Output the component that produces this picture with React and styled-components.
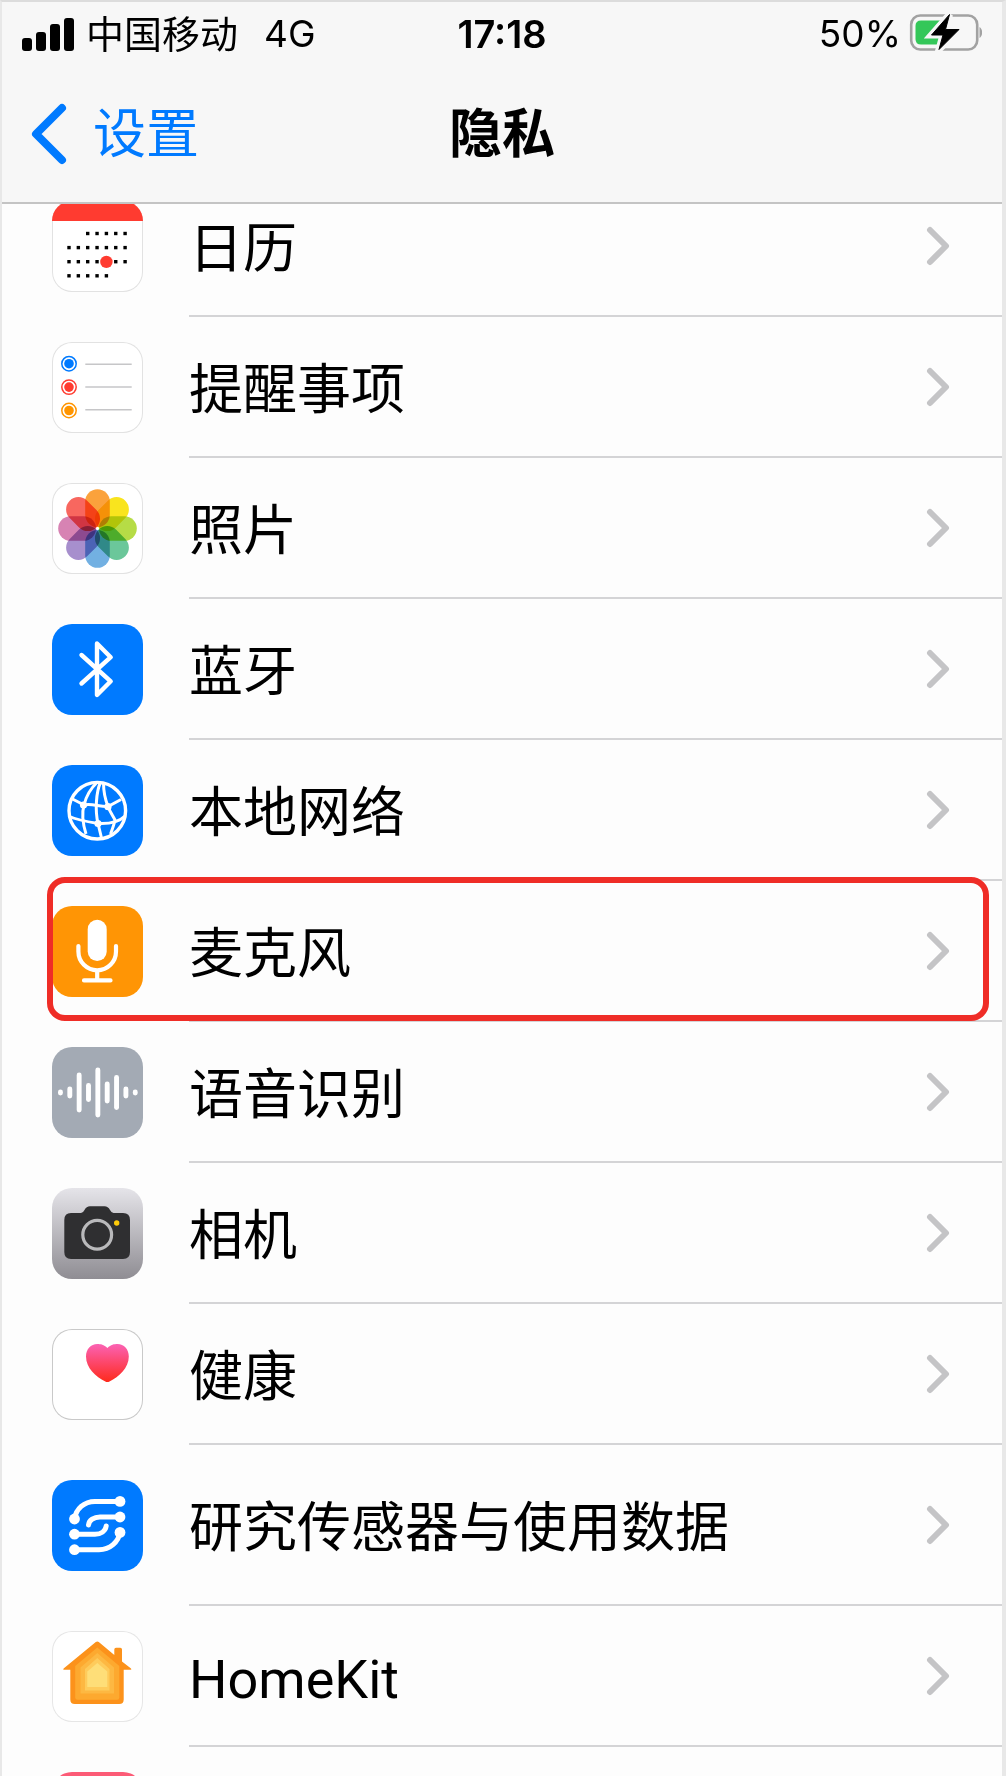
import React from "react";
import styled, { createGlobalStyle } from "styled-components";

const GlobalStyle = createGlobalStyle`
  * {
    box-sizing: border-box;
  }
  body {
    margin: 0;
    background-color: #fdfdfd;
    color: #000;
    font-family: Inter, "Noto Sans CJK SC", sans-serif;
  }
`;

const Page = styled.div`
  display: flex;
  flex-direction: column;
  height: 100vh;
  overflow: hidden;
  border: solid #e8e8e8;
  border-width: 2px 4px 0 2px;
  border-top-color: #dcdcdc;
`;

const Header = styled.header`
  position: relative;
  z-index: 1;
  flex: none;
  background-color: #f7f7f7;
  border-bottom: 2px solid #c4c4c4;
`;

const StatusBar = styled.div`
  display: grid;
  grid-template-columns: 1fr auto 1fr;
  align-items: center;
  height: 64px;
  padding: 0 20px;
  font-size: 37px;
  line-height: 40px;
`;

const StatusGroup = styled.div`
  display: flex;
  align-items: center;
  justify-content: ${props => props.$end ? 'flex-end' : 'flex-start'};
  gap: ${props => props.$end ? '8px' : '12px'};
`;

const Carrier = styled.span`
  font-size: 38px;
`;

const Network = styled.span`
  margin-left: 14px;
`;

const Clock = styled.time`
  font-size: 38px;
  font-weight: 600;
`;

const NavBar = styled.nav`
  display: grid;
  grid-template-columns: 1fr auto 1fr;
  align-items: center;
  height: 136px;
  padding: 0 28px;
  font-size: 53px;
  line-height: 64px;
`;

const BackLink = styled.a`
  display: flex;
  align-items: center;
  gap: 26px;
  color: #007aff;
  text-decoration: none;
`;

const Title = styled.h1`
  margin: 0;
  font-size: inherit;
  font-weight: 700;
`;

// the list is scrolled a little way under the header
const List = styled.ul`
  flex: 1;
  min-height: 0;
  margin: -28px 0 0;
  padding: 0;
  list-style: none;
  overflow-y: auto;
  scrollbar-width: none;
`;

const Item = styled.li`
  position: relative;
`;

const Row = styled.a`
  display: flex;
  align-items: center;
  gap: 46px;
  height: ${props => props.$tall ? '161px' : '141px'};
  padding-left: 50px;
  color: inherit;
  text-decoration: none;
`;

const RowBody = styled.span`
  display: flex;
  flex: 1;
  align-items: center;
  justify-content: space-between;
  height: 100%;
  padding-right: 52px;
  border-bottom: 2px solid #d4d4d6;
`;

const RowLabel = styled.span`
  padding-top: 8px;
  font-family: Roboto, "Noto Sans CJK SC", sans-serif;
  font-size: 54px;
  line-height: 64px;
`;

const Highlight = styled.div`
  position: absolute;
  inset: -4px 13px 1px 45px;
  border: 6px solid #ef2d27;
  border-radius: 18px;
  pointer-events: none;
`;

const IconTile = styled.svg`
  flex: none;
  width: 91px;
  height: 91px;
  border-radius: 20px;
  background: ${props => props.$bg || '#fff'};
  box-shadow: ${props => props.$edge ? `inset 0 0 0 1px ${props.$edge}` : 'none'};
`;

const SignalIcon = () => (
  <svg width="52" height="33" viewBox="0 0 52 33" aria-hidden="true">
    <rect x="0" y="20" width="10" height="13" rx="3" />
    <rect x="14" y="14" width="10" height="19" rx="3" />
    <rect x="28" y="6" width="10" height="27" rx="3" />
    <rect x="42" y="0" width="10" height="33" rx="3" />
  </svg>
);

const BOLT = "M39.5 1.5 L35.5 16.5 H49 L29 36.5 L33 22 H21.5 Z";

const BatteryIcon = () => (
  <svg width="73" height="40" viewBox="-1 1 73 40" aria-hidden="true">
    <rect x="1.2" y="2.5" width="66" height="34" rx="9" fill="none" stroke="#a2a2a2" strokeWidth="2.6" />
    <path d="M69.5 14 C73 16 73 23 69.5 25 Z" fill="#a2a2a2" />
    <path d="M11 7.5 H33 V31.5 H11 Q5.5 31.5 5.5 26 V13 Q5.5 7.5 11 7.5 Z" fill="#34c759" />
    <path d={BOLT} fill="#f7f7f7" stroke="#f7f7f7" strokeWidth="7" />
    <path d={BOLT} stroke="#000" strokeWidth="1" strokeLinejoin="round" />
  </svg>
);

const BackIcon = () => (
  <svg width="37" height="62" viewBox="0 0 37 62" fill="none" aria-hidden="true">
    <path d="M32 5 L6 31 L32 57" stroke="#007aff" strokeWidth="8" strokeLinecap="round" strokeLinejoin="round" />
  </svg>
);

const ChevronIcon = () => (
  <svg width="24" height="40" viewBox="0 0 24 40" fill="none" aria-hidden="true">
    <path d="M4 4 L20 20 L4 36" stroke="#c4c4c6" strokeWidth="6" strokeLinecap="round" strokeLinejoin="round" />
  </svg>
);

// [first dot, last dot] of each week
const weeks = [[2, 6], [0, 6], [0, 6], [0, 4]];

const CalendarIcon = () => (
  <IconTile viewBox="0 0 91 91" $edge="#e2e2e2">
    <rect width="91" height="20" fill="#ff3b30" />
    {weeks.map(([first, last], row) =>
      Array.from({ length: last - first + 1 }, (_, i) => (
        <rect key={`${row}-${i}`} x={15.3 + (first + i) * 9.35} y={30.8 + row * 14.1} width="3.4" height="3.4" />
      ))
    )}
    <circle cx="54.4" cy="60.9" r="7.5" fill="#fff" />
    <circle cx="54.4" cy="60.9" r="6.2" fill="#ff3b30" />
  </IconTile>
);

const RemindersIcon = () => (
  <IconTile viewBox="0 0 91 91" $edge="#e2e2e2">
    {['#007aff', '#ff3b30', '#ff9500'].map((color, i) => (
      <g key={color}>
        <circle cx="17" cy={21.7 + i * 23.4} r="7.2" fill="none" stroke={color} strokeWidth="1.5" />
        <circle cx="17" cy={21.7 + i * 23.4} r="4.8" fill={color} />
        <path d={`M33.3 ${22.2 + i * 22.8} H79.7`} stroke="#c6c6c8" strokeWidth="1.4" />
      </g>
    ))}
  </IconTile>
);

const petals = ['#fba23c', '#f9e41e', '#b6dc46', '#6bc79a', '#72b0e2', '#a78fcd', '#d783b3', '#f8675f'];

const Petal = styled.rect`
  mix-blend-mode: multiply;
`;

const PhotosIcon = () => (
  <IconTile viewBox="0 0 91 91" $edge="#e2e2e2">
    {petals.map((color, i) => (
      <Petal
        key={color}
        x="33.2"
        y="6.2"
        width="24.6"
        height="37.8"
        rx="12.3"
        fill={color}
        transform={`rotate(${i * 45} 45.5 45.5)`}
      />
    ))}
  </IconTile>
);

const BluetoothIcon = () => (
  <IconTile viewBox="0 0 91 91" $bg="#007aff" fill="none">
    <path d="M29.5 31 L58.7 57.3 L45 71 V19.5 L58.7 33.2 L29.5 59.5" stroke="#fff" strokeWidth="4.4" strokeLinecap="round" strokeLinejoin="round" />
  </IconTile>
);

const GlobeIcon = () => (
  <IconTile viewBox="0 0 91 91" $bg="#007aff" fill="none">
    <g stroke="#fff" strokeWidth="3">
      <circle cx="45.3" cy="45.7" r="28.3" strokeWidth="3.4" />
      <path d="M45 17.5 C38 24 34 32 32 40 C30 47 30 56 34 69" />
      <path d="M48.5 17.5 C44 27 43 46 46 58.5 L49.5 73" />
      <path d="M51.5 17.5 C51.5 28 53 34 56 41.5 C58 47 61 51 63 55 C62 60 60 65 58.5 69" />
      <path d="M20.5 34 L32 40 C39 38 48 42 56 41.5 L69 34.5" />
      <path d="M17.5 51.500 C25 55 37 57 46 58.500 C56 59 67 57 73 51" />
    </g>
    <g fill="#fff">
      <circle cx="31.500" cy="40" r="3.600" />
      <circle cx="56" cy="41.700" r="3.600" />
      <circle cx="46" cy="58.500" r="3.600" />
    </g>
  </IconTile>
);

const MicrophoneIcon = () => (
  <IconTile viewBox="0 0 91 91" $bg="#ff9505" fill="none" stroke="#fff" strokeLinecap="round">
    <rect x="35.7" y="13.7" width="19" height="41.4" rx="9.5" fill="#fff" stroke="none" />
    <path d="M26.4 40 V45.5 A18.8 18.8 0 0 0 64 45.5 V40 M45.2 65 V74 M32 74.4 H58.5" strokeWidth="4.2" />
  </IconTile>
);

const waveBars = [6, 12, 40, 19, 50, 22, 35, 12, 6];

const SpeechIcon = () => (
  <IconTile viewBox="0 0 91 91" $bg="#a3aab4" fill="#fff">
    {waveBars.map((height, i) => (
      <rect key={i} x={6 + i * 9.35} y={45.5 - height / 2} width="4.9" height={height} rx="2.4" />
    ))}
  </IconTile>
);

const CameraIcon = () => (
  <IconTile viewBox="0 0 91 91" $bg="linear-gradient(#e5e4e9, #8f8d93)">
    <path
      d="M19 25 H29 Q31 25 32.5 22 Q34.5 18.3 38 18.3 H52.5 Q56 18.3 58 22 Q59.5 25 61.5 25 H71 Q78 25 78 32 V64 Q78 71 71 71 H19 Q12.3 71 12.3 64 V32 Q12.3 25 19 25 Z"
      fill="#2f2f31"
    />
    <circle cx="45.2" cy="46.8" r="14.4" fill="none" stroke="#b9b9bb" strokeWidth="3.2" />
    <circle cx="64.7" cy="35" r="2.7" fill="#fecb0a" />
  </IconTile>
);

const HealthIcon = () => (
  <IconTile viewBox="0 0 91 91" $edge="#c9c9c9">
    <defs>
      <linearGradient id="heart" x1="0" y1="0" x2="0" y2="1">
        <stop offset="0" stopColor="#fb62b4" />
        <stop offset="1" stopColor="#fe2a1c" />
      </linearGradient>
    </defs>
    <path
      d="M55.4 19 C59 15.5 62 15 65.5 15 C72 15 76.8 20 76.8 27.5 C76.8 39 67 47.5 57.5 52.6 Q55.4 53.6 53.3 52.6 C43.8 47.5 34 39 34 27.5 C34 20 38.8 15 45.3 15 C48.8 15 51.8 15.5 55.4 19 Z"
      fill="url(#heart)"
    />
  </IconTile>
);

const ResearchIcon = () => (
  <IconTile viewBox="0 0 91 91" $bg="#007aff" fill="none">
    <g stroke="#fff" strokeWidth="5" strokeLinecap="round">
      <path d="M22.5 39 C24 29 32 21.4 43 21.4 H68" />
      <path d="M36.5 45 C37 40 42 37 48 37 H68" />
      <path d="M22.5 54.2 H43 C49 54.2 53.5 51 54.2 46" />
      <path d="M22.5 69.7 H47 C58 69.7 66.5 62 68 52.4" />
    </g>
    <g fill="#fff">
      <circle cx="68" cy="21.4" r="5.4" />
      <circle cx="22.5" cy="39" r="5.4" />
      <circle cx="68" cy="37" r="5.4" />
      <circle cx="22.5" cy="54.2" r="5.4" />
      <circle cx="68" cy="52.4" r="5.4" />
      <circle cx="22.5" cy="69.7" r="5.4" />
    </g>
  </IconTile>
);

const HomeIcon = () => (
  <IconTile viewBox="0 0 91 91" $edge="#e6e6e6">
    <path
      d="M43.8 11 Q45.3 9.8 46.8 11 L62.3 24 V18.5 Q62.3 16.7 64 16.7 H68.3 Q70 16.7 70 18.5 V30.5 L79 37.5 Q80 38.8 78.5 38.8 H71.7 V68.5 Q71.7 73 67.2 73 H22.8 Q18.3 73 18.3 68.5 V38.8 H12 Q10.5 38.8 11.6 37.5 Z"
      fill="#fc921b"
    />
    <path d="M45.3 16.5 L67.3 35 V66.5 Q67.3 68.7 65 68.7 H25.5 Q23.2 68.7 23.2 66.5 V35 Z" fill="#fda92f" />
    <path d="M45.3 22 L62 36.5 V62.5 H28.5 V36.5 Z" fill="#fdb842" />
    <path d="M45.3 27 L57.5 38 V59.5 H33 V38 Z" fill="#fecb5b" />
    <path d="M45.3 32 L55.3 40.5 V56 H35.3 V40.5 Z" fill="#fede78" />
  </IconTile>
);

const MusicIcon = () => <IconTile viewBox="0 0 91 91" $bg="#fc5b76" />;

const items = [
  { label: '日历', icon: CalendarIcon },
  { label: '提醒事项', icon: RemindersIcon },
  { label: '照片', icon: PhotosIcon },
  { label: '蓝牙', icon: BluetoothIcon },
  { label: '本地网络', icon: GlobeIcon },
  { label: '麦克风', icon: MicrophoneIcon, highlighted: true },
  { label: '语音识别', icon: SpeechIcon },
  { label: '相机', icon: CameraIcon },
  { label: '健康', icon: HealthIcon },
  { label: '研究传感器与使用数据', icon: ResearchIcon, tall: true },
  { label: 'HomeKit', icon: HomeIcon },
];

const App = () => {
  return (
    <>
      <GlobalStyle />
      <Page>
        <Header>
          <StatusBar>
            <StatusGroup>
              <SignalIcon />
              <Carrier>中国移动</Carrier>
              <Network>4G</Network>
            </StatusGroup>
            <Clock>17:18</Clock>
            <StatusGroup $end>
              <span>50%</span>
              <BatteryIcon />
            </StatusGroup>
          </StatusBar>
          <NavBar>
            <BackLink href="#settings">
              <BackIcon />
              <span>设置</span>
            </BackLink>
            <Title>隐私</Title>
          </NavBar>
        </Header>
        <List>
          {items.map(({ label, icon: Icon, tall, highlighted }) => (
            <Item key={label}>
              <Row href="#" $tall={tall}>
                <Icon />
                <RowBody>
                  <RowLabel>{label}</RowLabel>
                  <ChevronIcon />
                </RowBody>
              </Row>
              {highlighted && <Highlight />}
            </Item>
          ))}
          <Item>
            <Row as="div">
              <MusicIcon />
            </Row>
          </Item>
        </List>
      </Page>
    </>
  );
};

export default App;
